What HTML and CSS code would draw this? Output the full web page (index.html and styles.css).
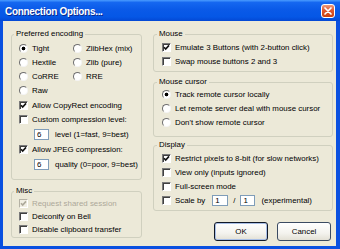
FILE: index.html
```html
<!DOCTYPE html>
<html>
<head>
    <meta charset="utf-8">
    <link rel="stylesheet" href="styles.css">
</head>
<body>
    <div class="window">
        <div class="titlebar">
            <span class="title">Connection Options...</span>
            <span class="close-btn">
                <svg width="12" height="12" viewBox="0 0 12 12"><path d="M3 3 L9 9 M9 3 L3 9" stroke="#fff" stroke-width="1.7" stroke-linecap="round"/></svg>
            </span>
        </div>

        <div class="dialog">
            <div class="column col-left">
                <fieldset id="fs-encoding">
                    <legend>Preferred encoding</legend>
                    <div class="radio-grid">
                        <div class="row"><span class="radio checked"></span>Tight</div>
                        <div class="row"><span class="radio"></span>ZlibHex (mix)</div>
                        <div class="row"><span class="radio"></span>Hextile</div>
                        <div class="row"><span class="radio"></span>Zlib (pure)</div>
                        <div class="row"><span class="radio"></span>CoRRE</div>
                        <div class="row"><span class="radio"></span>RRE</div>
                        <div class="row"><span class="radio"></span>Raw</div>
                    </div>
                    <div class="row"><span class="check"><svg viewBox="0 0 7 7"><polyline points="1,3.2 2.7,5 6,1.4"/></svg></span>Allow CopyRect encoding</div>
                    <div class="row"><span class="check"></span>Custom compression level:</div>
                    <div class="row tall"><input class="field indent" type="text" value="6">level (1=fast, 9=best)</div>
                    <div class="row"><span class="check"><svg viewBox="0 0 7 7"><polyline points="1,3.2 2.7,5 6,1.4"/></svg></span>Allow JPEG compression:</div>
                    <div class="row tall"><input class="field indent" type="text" value="6">quality (0=poor, 9=best)</div>
                </fieldset>

                <fieldset id="fs-misc">
                    <legend>Misc</legend>
                    <div class="row disabled"><span class="check"><svg viewBox="0 0 7 7"><polyline points="1,3.2 2.7,5 6,1.4"/></svg></span>Request shared session</div>
                    <div class="row"><span class="check"></span>Deiconify on Bell</div>
                    <div class="row"><span class="check"></span>Disable clipboard transfer</div>
                </fieldset>
            </div>

            <div class="column col-right">
                <fieldset id="fs-mouse">
                    <legend>Mouse</legend>
                    <div class="row"><span class="check"><svg viewBox="0 0 7 7"><polyline points="1,3.2 2.7,5 6,1.4"/></svg></span>Emulate 3 Buttons (with 2-button click)</div>
                    <div class="row"><span class="check"></span>Swap mouse buttons 2 and 3</div>
                </fieldset>

                <fieldset id="fs-cursor">
                    <legend>Mouse cursor</legend>
                    <div class="row"><span class="radio checked"></span>Track remote cursor locally</div>
                    <div class="row"><span class="radio"></span>Let remote server deal with mouse cursor</div>
                    <div class="row"><span class="radio"></span>Don't show remote cursor</div>
                </fieldset>

                <fieldset id="fs-display">
                    <legend>Display</legend>
                    <div class="row"><span class="check"><svg viewBox="0 0 7 7"><polyline points="1,3.2 2.7,5 6,1.4"/></svg></span>Restrict pixels to 8-bit (for slow networks)</div>
                    <div class="row"><span class="check"></span>View only (inputs ignored)</div>
                    <div class="row"><span class="check"></span>Full-screen mode</div>
                    <div class="row">
                        <span class="check"></span>Scale by
                        <input class="field scale-a" type="text" value="1">
                        <span class="slash">/</span>
                        <input class="field scale-b" type="text" value="1">
                        (experimental)
                    </div>
                </fieldset>

                <div class="btn-row">
                    <button class="btn default">OK</button>
                    <button class="btn">Cancel</button>
                </div>
            </div>
        </div>
    </div>
</body>
</html>
```

FILE: styles.css
```css
:root {
    --face: #ECE9D8;
    --frame: #0A50E0;
    --group-line: #D0D0BF;
    --muted: #ACA899;
    --ui-font: "Liberation Sans", Arial, sans-serif;
}

* {
    box-sizing: border-box;
    margin: 0;
    padding: 0;
}

body {
    width: 340px;
    height: 249px;
    overflow: hidden;

    font-family: var(--ui-font);
    font-size: 7.9px;
    color: #000;
}

.window {
    display: flex;
    flex-direction: column;
    width: 340px;
    height: 249px;

    background-color: var(--frame);
}

.titlebar {
    display: flex;
    align-items: center;
    justify-content: space-between;
    height: 21px;
    padding: 0 5px;

    background: linear-gradient(to bottom, #4A9CFF 0%, #1567F0 12%, #0A5AE8 45%, #0557E6 80%, #0348D4 100%);
}

.title {
    padding-top: 2px;

    color: #fff;
    font-size: 10px;
    font-weight: bold;
    letter-spacing: -0.3px;
    text-shadow: 1px 1px 0 #0B2A8C;
}

.close-btn {
    display: flex;
    align-items: center;
    justify-content: center;
    width: 14px;
    height: 14px;

    border: 1px solid #fff;
    border-radius: 3px;
    background: linear-gradient(to bottom, #EC9A7C 0%, #E0582F 45%, #C9400F 100%);
}

.dialog {
    flex: 1;
    display: flex;
    gap: 11px;
    margin: 0 4px 3px 3px;
    padding: 8px 3px 0 8px;

    background-color: var(--face);
}

.column {
    display: flex;
    flex-direction: column;
}

.col-left {
    width: 131px;
}

.col-right {
    width: 180px;
}

fieldset {
    min-width: 0;
    padding: 1px 8px 3px 8px;

    border: 1px solid var(--group-line);
    border-radius: 3px;
}

.col-left fieldset {
    padding-left: 7px;
}

legend {
    margin-left: -5px;
    padding: 0 2px;
    line-height: 10px;
}

#fs-encoding {
    padding-top: 2px;
    padding-bottom: 7px;
}

#fs-misc {
    margin-top: 6px;
    padding-bottom: 1px;
}

#fs-misc .row {
    height: 13px;
}

#fs-cursor {
    margin-top: 5px;
    padding-top: 0;
    padding-bottom: 7px;
}

#fs-display {
    margin-top: 3px;
}

.row {
    display: flex;
    align-items: center;
    height: 14px;
    white-space: nowrap;
}

.row.tall {
    height: 16px;
}

.row.disabled {
    color: var(--muted);
}

.radio-grid {
    display: grid;
    grid-template-columns: 54px auto;
    margin-bottom: 1px;
}

.radio {
    flex-shrink: 0;
    width: 9px;
    height: 9px;
    margin-right: 4px;

    border: 1px solid;
    border-color: #6F6F6F #F4F4F4 #F4F4F4 #6F6F6F;
    border-radius: 50%;
    background-color: #fff;
}

.radio.checked {
    background: radial-gradient(circle, #000 0 1.5px, #fff 2.2px);
}

.check {
    display: flex;
    flex-shrink: 0;
    width: 9px;
    height: 9px;
    margin-right: 4px;

    border: 1px solid;
    border-color: #7A7A7A #fff #fff #7A7A7A;
    box-shadow: inset 1px 1px 0 #404040;
    background-color: #fff;
}

.check svg {
    width: 7px;
    height: 7px;
}

.check polyline {
    fill: none;
    stroke: #111;
    stroke-width: 1.6;
}

.disabled .check {
    border-color: #B5B2A5 #fff #fff #B5B2A5;
    box-shadow: none;
    background-color: #F1EFE4;
}

.disabled .check polyline {
    stroke: var(--muted);
}

.field {
    width: 16px;
    height: 11px;
    padding: 0 2px;

    border: 1px solid #7F9DB9;
    background-color: #fff;

    font-family: var(--ui-font);
    font-size: 7.9px;
    color: #000;
}

.field.indent {
    width: 15px;
    margin-left: 15px;
    margin-right: 6px;
}

.scale-a {
    margin-left: 7px;
}

.slash {
    margin: 0 5px;
}

.scale-b {
    width: 15px;
    margin-right: 6px;
}

.btn-row {
    display: flex;
    justify-content: flex-end;
    gap: 9px;
    margin-top: 11px;
    padding-right: 2px;
}

.btn {
    width: 54px;
    height: 19px;

    border: 1px solid #3B4B62;
    border-radius: 3px;
    background: linear-gradient(to bottom, #FFFFFF 0%, #F4F3EE 60%, #E3E0D5 100%);

    font-family: var(--ui-font);
    font-size: 7.9px;
    color: #000;
}

.btn.default {
    border-color: #101828;
    box-shadow: inset 0 0 0 1px #A9BFE6;
}
```
